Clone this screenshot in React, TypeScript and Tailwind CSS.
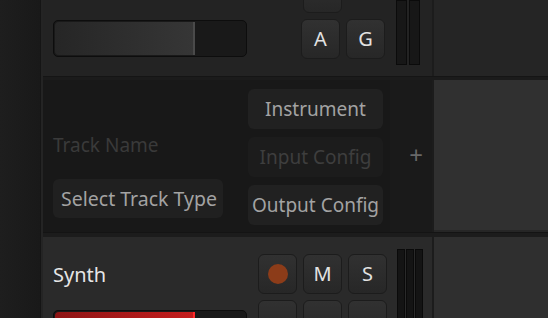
import React from 'react';

const font = { fontFamily: '"Noto Sans", "Open Sans", sans-serif' };

function SqButton({ children, className = '' }: { children?: React.ReactNode; className?: string }) {
  return (
    <div
      className={`w-[39px] h-[40px] shrink-0 rounded-[6px] border border-[#1c1c1c] bg-gradient-to-b from-[#313131] to-[#272727] flex items-center justify-center text-[#e2e2e2] text-[20px] ${className}`}
    >
      {children}
    </div>
  );
}

function WideButton({ children, dim = false }: { children: React.ReactNode; dim?: boolean }) {
  return (
    <div
      className={`w-[135px] h-[40px] rounded-[6px] flex items-center justify-center text-[19px] whitespace-nowrap ${
        dim ? 'bg-[#1c1c1c] text-[#3e3e3e]' : 'bg-[#212121] text-[#a3a3a3]'
      }`}
    >
      {children}
    </div>
  );
}

function Fader({ red = false }: { red?: boolean }) {
  return (
    <div className="w-[194px] h-[37px] rounded-[5px] border border-[#0d0d0d] bg-[#191919] p-[1px] flex">
      <div
        className={`w-[140px] h-full rounded-l-[4px] border-r-2 ${
          red
            ? 'bg-gradient-to-r from-[#8e1515] to-[#c41d1d] border-[#ff2a2a]'
            : 'bg-gradient-to-r from-[#262626] to-[#363636] border-[#4a4a4a]'
        }`}
      />
    </div>
  );
}

export default function App() {
  return (
    <div className="w-[548px] h-[318px] overflow-hidden flex bg-[#1a1a1a]" style={font}>
      {/* left strip */}
      <div className="w-[40px] shrink-0 bg-gradient-to-r from-[#1e1e1e] to-[#191919]" />
      <div className="w-[3px] shrink-0 bg-[#242424] border-l border-[#151515]" />

      <div className="flex-1 flex flex-col">
        {/* track 1 */}
        <div className="h-[76px] flex shrink-0">
          <div className="w-[389px] bg-[#232323] flex pl-[10px] overflow-hidden">
            <div className="w-[205px] pt-[20px]">
              <Fader />
            </div>
            <div className="flex flex-col mt-[-27px]">
              <div className="flex gap-[6px] pl-[45px]">
                <SqButton />
              </div>
              <div className="flex gap-[6px] pl-[43px] mt-[6px]">
                <SqButton>A</SqButton>
                <SqButton>G</SqButton>
              </div>
            </div>
            <div className="flex gap-[2px] ml-[11px] h-[65px]">
              <div className="w-[11px] h-full bg-[#171717] border border-[#0b0b0b]" />
              <div className="w-[11px] h-full bg-[#171717] border border-[#0b0b0b]" />
            </div>
          </div>
          <div className="w-[2px] bg-[#1c1c1c]" />
          <div className="flex-1 bg-[#252525]" />
        </div>
        <div className="h-[4px] shrink-0 bg-[#1b1b1b] border-t border-[#151515]" />

        {/* new track */}
        <div className="h-[152px] flex shrink-0">
          <div className="w-[389px] bg-[#181818] flex pl-[10px]">
            <div className="w-[195px] flex flex-col pt-[52px]">
              <div className="h-[26px] flex items-center text-[19px] text-[#3a3a3a] whitespace-nowrap">Track Name</div>
              <div className="mt-[21px] w-[170px] h-[39px] rounded-[6px] bg-[#202020] flex items-center justify-center pl-[2px] text-[19.5px] text-[#a3a3a3] whitespace-nowrap">
                Select Track Type
              </div>
            </div>
            <div className="flex flex-col gap-[8px] pt-[9px]">
              <WideButton>Instrument</WideButton>
              <WideButton dim>Input Config</WideButton>
              <WideButton>Output Config</WideButton>
            </div>
            <div className="flex-1 bg-[#1a1a1a] ml-[7px] flex items-center justify-center pl-[10px] pb-[2px] text-[24px] text-[#686868]">
              +
            </div>
          </div>
          <div className="w-[2px] bg-[#1c1c1c]" />
          <div className="flex-1 bg-[#303030] border-b-2 border-[#262626]" />
        </div>
        <div className="h-[5px] shrink-0 bg-[#1c1c1c] border-t border-[#141414]" />

        {/* synth track */}
        <div className="flex-1 flex">
          <div className="w-[389px] bg-[#2a2a2a] flex pl-[10px]">
            <div className="w-[205px] flex flex-col">
              <div className="h-[60px] pt-[16px] flex items-center text-[20px] text-[#e6e6e6]">Synth</div>
              <div className="mt-[13px]">
                <Fader red />
              </div>
            </div>
            <div className="flex flex-col pt-[17px]">
              <div className="flex gap-[6px]">
                <SqButton>
                  <div className="w-[20px] h-[20px] rounded-full bg-[#8c3c19]" />
                </SqButton>
                <SqButton>M</SqButton>
                <SqButton>S</SqButton>
              </div>
              <div className="flex gap-[6px] mt-[6px]">
                <SqButton />
                <SqButton />
                <SqButton />
              </div>
            </div>
            <div className="flex gap-[1px] ml-[10px] pt-[12px]">
              <div className="w-[8px] h-[80px] bg-[#141414] border border-[#0a0a0a]" />
              <div className="w-[8px] h-[80px] bg-[#141414] border border-[#0a0a0a]" />
              <div className="w-[8px] h-[80px] bg-[#141414] border border-[#0a0a0a]" />
            </div>
          </div>
          <div className="w-[2px] bg-[#1c1c1c]" />
          <div className="flex-1 bg-[#2f2f2f]" />
        </div>
      </div>
    </div>
  );
}
